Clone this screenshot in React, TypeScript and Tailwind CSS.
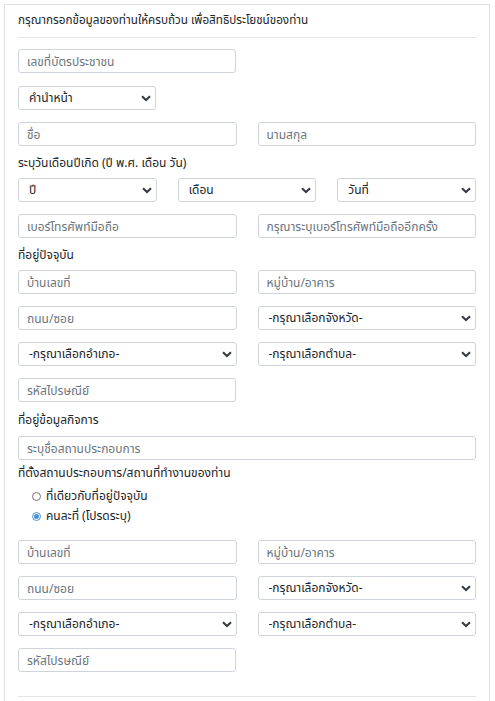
import React from "react";

const inputCls =
  "block h-[24px] w-full rounded-[3px] border border-[#ced4da] bg-white px-[8px] text-[12px] text-[#495057] outline-none placeholder:text-[#6c757d]";

function TextBox({ placeholder, className = "" }: { placeholder: string; className?: string }) {
  return <input type="text" placeholder={placeholder} className={`${inputCls} ${className}`} />;
}

function Select({ label, className = "" }: { label: string; className?: string }) {
  return (
    <div className={`relative ${className}`}>
      <select className="block h-[24px] w-full appearance-none rounded-[3px] border border-[#ced4da] bg-white pl-[10px] pr-[20px] text-[12px] text-[#212529] outline-none">
        <option>{label}</option>
      </select>
      <svg
        className="pointer-events-none absolute right-[5px] top-[9px]"
        width="10"
        height="7"
        viewBox="0 0 10 7"
      >
        <path d="M1 1.2 L5 5 L9 1.2" fill="none" stroke="#343a40" strokeWidth="2" />
      </svg>
    </div>
  );
}

function Label({ children, className = "" }: { children: React.ReactNode; className?: string }) {
  return <div className={`h-[20px] text-[12px] leading-[20px] text-[#212529] ${className}`}>{children}</div>;
}

function Row({ children, className = "" }: { children: React.ReactNode; className?: string }) {
  return <div className={`grid grid-cols-2 gap-x-[21px] ${className}`}>{children}</div>;
}

function Radio({ label, checked }: { label: string; checked?: boolean }) {
  return (
    <label className="flex h-[20px] items-center pl-[14px] text-[12px] text-[#212529]">
      <span
        className={`mr-[5px] flex h-[9px] w-[9px] items-center justify-center rounded-full border ${
          checked ? "border-[#4a90d9] bg-white" : "border-[#767676] bg-white"
        }`}
      >
        {checked && <span className="h-[5px] w-[5px] rounded-full bg-[#4a90d9]" />}
      </span>
      {label}
    </label>
  );
}

function AddressBlock() {
  return (
    <>
      <Row>
        <TextBox placeholder="บ้านเลขที่" />
        <TextBox placeholder="หมู่บ้าน/อาคาร" />
      </Row>
      <Row className="mt-[12px]">
        <TextBox placeholder="ถนน/ซอย" />
        <Select label="-กรุณาเลือกจังหวัด-" />
      </Row>
      <Row className="mt-[12px]">
        <Select label="-กรุณาเลือกอำเภอ-" />
        <Select label="-กรุณาเลือกตำบล-" />
      </Row>
      <TextBox placeholder="รหัสไปรษณีย์" className="mt-[12px] !w-[218px]" />
    </>
  );
}

export default function App() {
  return (
    <div
      className="h-[701px] w-[495px] overflow-hidden bg-white pl-[4px] pr-[5px] pt-[4px]"
      style={{ fontFamily: '"Noto Sans", "Noto Sans Thai", "Noto Sans CJK SC", sans-serif' }}
    >
      <div className="h-full border border-b-0 border-[#dee2e6] px-[13px] pt-[4px]">
        <div className="h-[20px] text-[11.7px] leading-[20px] text-[#212529]">
          กรุณากรอกข้อมูลของท่านให้ครบถ้วน เพื่อสิทธิประโยชน์ของท่าน
        </div>
        <div className="mt-[8px] border-t border-[#e5e5e5]" />

        <TextBox placeholder="เลขที่บัตรประชาชน" className="mt-[11px] !w-[218px]" />
        <Select label="คำนำหน้า" className="mt-[13px] w-[138px]" />
        <Row className="mt-[12px]">
          <TextBox placeholder="ชื่อ" />
          <TextBox placeholder="นามสกุล" />
        </Row>

        <Label className="mt-[7px] mb-[5px]">ระบุวันเดือนปีเกิด (ปี พ.ศ. เดือน วัน)</Label>
        <div className="grid grid-cols-3 gap-x-[21px]">
          <Select label="ปี" />
          <Select label="เดือน" />
          <Select label="วันที่" />
        </div>
        <Row className="mt-[12px]">
          <TextBox placeholder="เบอร์โทรศัพท์มือถือ" />
          <TextBox placeholder="กรุณาระบุเบอร์โทรศัพท์มือถืออีกครั้ง" />
        </Row>

        <Label className="mt-[7px] mb-[5px]">ที่อยู่ปัจจุบัน</Label>
        <AddressBlock />

        <Label className="mt-[8px] mb-[6px]">ที่อยู่ข้อมูลกิจการ</Label>
        <TextBox placeholder="ระบุชื่อสถานประกอบการ" />
        <Label className="mt-[3px]">ที่ตั้งสถานประกอบการ/สถานที่ทำงานของท่าน</Label>
        <div className="mt-[3px]">
          <Radio label="ที่เดียวกับที่อยู่ปัจจุบัน" />
          <Radio label="คนละที่ (โปรดระบุ)" checked />
        </div>

        <div className="mt-[14px]">
          <AddressBlock />
        </div>
        <div className="mt-[24px] border-t border-[#e5e5e5]" />
      </div>
    </div>
  );
}
